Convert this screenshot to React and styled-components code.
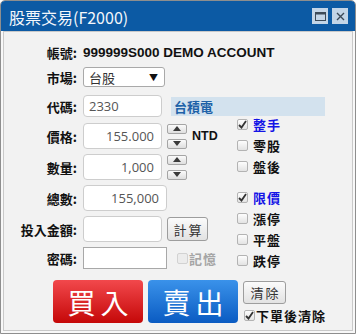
import styled, { createGlobalStyle } from "styled-components";

const GlobalStyle = createGlobalStyle`
  html, body { margin: 0; padding: 0; background: #ffffff; }
  body { font-family: "Noto Sans CJK TC", "Liberation Sans", sans-serif; }
  * { box-sizing: border-box; }
`;

const Window = styled.div`
  width: 356px;
  height: 334px;
  border: 1px solid #8e8e8e;
  border-radius: 5px 5px 0 0;
  background: #f8f8f8;
  display: flex;
  flex-direction: column;
  overflow: hidden;
`;

const TitleBar = styled.div`
  height: 30px;
  flex: none;
  background: #0c5aa4;
  display: flex;
  align-items: center;
  justify-content: space-between;
  padding: 0 7px 0 8px;
`;

const Title = styled.span`
  color: #f4f7fb;
  font-size: 16px;
  line-height: 1;
  margin-top: 2px;
`;

const TitleButtons = styled.div`
  display: flex;
  gap: 4px;
`;

const TitleButton = styled.span`
  width: 16px;
  height: 16px;
  background: #c3d5e7;
  display: flex;
  align-items: center;
  justify-content: center;
`;

const Body = styled.div`
  flex: 1;
  margin: 0 2px 2px;
  border: 1px solid #c9c9c9;
  background: #f2f2f2;
  padding-top: 10px;
`;

const Row = styled.div`
  display: flex;
  align-items: center;
  height: ${(p) => p.$h || 26}px;
  margin-top: ${(p) => p.$mt || 0}px;
`;

const Label = styled.span`
  width: 73px;
  margin-right: 6px;
  flex: none;
  text-align: right;
  font-size: 13px;
  font-weight: bold;
  line-height: 1;
  color: #111;
  white-space: nowrap;
`;

const Account = styled.span`
  font-family: "Liberation Sans", sans-serif;
  font-size: 13.5px;
  font-weight: bold;
  color: #111;
`;

const SelectBox = styled.div`
  width: 82px;
  height: 20px;
  background: #fff;
  border: 1px solid #a9a9a9;
  border-radius: 3px;
  display: flex;
  align-items: center;
  justify-content: space-between;
  padding: 0 6px 0 5px;
  font-size: 13px;
  color: #333;
  line-height: 1;
`;

const Arrow = styled.span`
  font-size: 9px;
  color: #111;
`;

const Field = styled.input`
  width: ${(p) => p.$w || 79}px;
  height: ${(p) => p.$h || 26}px;
  border: 1px solid ${(p) => (p.$square ? "#a8a8a8" : "#cdcdcd")};
  border-radius: ${(p) => (p.$square ? 0 : 4)}px;
  background: #fff;
  font-family: "Open Sans", "Liberation Sans", sans-serif;
  font-size: 13px;
  color: #555;
  text-align: ${(p) => (p.$right ? "right" : "left")};
  padding: 0 7px 0 5px;
  outline: none;
`;

const StockName = styled.span`
  width: 154px;
  height: 19px;
  margin-left: 9px;
  background: #d3e2ee;
  color: #1f62a8;
  font-size: 13px;
  font-weight: bold;
  line-height: 19px;
  padding-left: 3px;
`;

const Middle = styled.div`
  display: flex;
`;

const LeftCol = styled.div`
  width: 232px;
  flex: none;
  padding-top: 6px;
`;

const RightCol = styled.div`
  margin-top: -3px;
  padding-left: 1px;
`;

const Spinner = styled.div`
  display: flex;
  flex-direction: column;
  justify-content: space-between;
  height: 25px;
  margin-left: 5px;
`;

const SpinButton = styled.span`
  width: 20px;
  height: 10px;
  border: 1px solid #a5a5a5;
  border-radius: 2px;
  background: linear-gradient(#fbfbfb, #dedede);
  display: flex;
  align-items: center;
  justify-content: center;
`;

const Unit = styled.span`
  margin-left: 5px;
  font-family: "Liberation Sans", sans-serif;
  font-size: 12.5px;
  font-weight: bold;
  color: #111;
`;

const SmallButton = styled.button`
  width: ${(p) => p.$w || 41}px;
  height: ${(p) => p.$h || 24}px;
  margin-left: ${(p) => p.$ml || 0}px;
  border: 1px solid #9d9d9d;
  border-radius: 3px;
  background: linear-gradient(#fbfbfb, #e2e2e2);
  font-family: "Noto Sans CJK TC", sans-serif;
  font-size: 13px;
  letter-spacing: 2px;
  padding: 0 0 0 2px;
  color: #333;
  line-height: 1;
`;

const CheckRow = styled.label`
  display: flex;
  align-items: center;
  height: ${(p) => p.$h || 21}px;
  margin-top: ${(p) => p.$mt || 0}px;
  margin-left: ${(p) => p.$ml || 0}px;
  gap: ${(p) => p.$gap ?? 5}px;
  font-size: 13px;
  font-weight: bold;
  line-height: 1;
  letter-spacing: 1px;
  color: ${(p) => (p.$disabled ? "#a5a5a5" : p.$blue ? "#1414e6" : "#111")};
`;

const Box = styled.span`
  width: 11px;
  height: 11px;
  flex: none;
  border: 1px solid ${(p) => (p.$disabled ? "#d2d2d2" : "#b3b3b3")};
  border-radius: 2px;
  background: ${(p) =>
    p.$disabled ? "#ececec" : "linear-gradient(#fdfdfd, #e3e3e3)"};
  display: flex;
  align-items: center;
  justify-content: center;
`;

const Actions = styled.div`
  display: flex;
  gap: 5px;
  padding-left: 49px;
  margin-top: 9px;
`;

const BigButton = styled.button`
  width: 90px;
  height: 43px;
  border: none;
  border-radius: 4px;
  background: ${(p) =>
    p.$buy
      ? "linear-gradient(#f2484c, #c50808)"
      : "linear-gradient(#3a92ea, #0a5bc2)"};
  color: #fff;
  font-family: "Noto Sans CJK TC", sans-serif;
  font-size: 28px;
  letter-spacing: 5px;
  padding: 0 0 0 5px;
  line-height: 1;
`;

const SideActions = styled.div`
  display: flex;
  flex-direction: column;
  padding-top: 1px;
`;

const Check = () => (
  <svg width="9" height="9" viewBox="0 0 9 9">
    <path d="M1 5 L3.5 7.5 L8 1" fill="none" stroke="#333" strokeWidth="1.8" />
  </svg>
);

const Tri = ({ down }) => (
  <svg width="8" height="5" viewBox="0 0 8 5">
    <path d={down ? "M0 0 H8 L4 5 Z" : "M0 5 H8 L4 0 Z"} fill="#3a3a3a" />
  </svg>
);

const CheckItem = ({ label, checked, blue, disabled, ...rest }) => (
  <CheckRow $blue={blue} $disabled={disabled} {...rest}>
    <Box $disabled={disabled}>{checked && <Check />}</Box>
    {label}
  </CheckRow>
);

const SpinPair = () => (
  <Spinner>
    <SpinButton>
      <Tri />
    </SpinButton>
    <SpinButton>
      <Tri down />
    </SpinButton>
  </Spinner>
);

export default function App() {
  return (
    <>
      <GlobalStyle />
      <Window>
        <TitleBar>
          <Title>股票交易(F2000)</Title>
          <TitleButtons>
            <TitleButton>
              <svg width="11" height="9" viewBox="0 0 11 9">
                <rect x="0.5" y="0.5" width="10" height="8" fill="none" stroke="#3c4a58" />
                <rect x="0" y="0" width="11" height="2.5" fill="#3c4a58" />
              </svg>
            </TitleButton>
            <TitleButton>
              <svg width="9" height="9" viewBox="0 0 9 9">
                <path d="M1 1 L8 8 M8 1 L1 8" stroke="#3c4a58" strokeWidth="1.4" />
              </svg>
            </TitleButton>
          </TitleButtons>
        </TitleBar>
        <Body>
          <Row $h={20}>
            <Label>帳號:</Label>
            <Account>999999S000 DEMO ACCOUNT</Account>
          </Row>
          <Row $h={20} $mt={5}>
            <Label>市場:</Label>
            <SelectBox>
              台股
              <Arrow>▼</Arrow>
            </SelectBox>
          </Row>
          <Row $h={22} $mt={8}>
            <Label>代碼:</Label>
            <Field $h={22} defaultValue="2330" readOnly />
            <StockName>台積電</StockName>
          </Row>
          <Middle>
            <LeftCol>
              <Row>
                <Label>價格:</Label>
                <Field $right defaultValue="155.000" readOnly />
                <SpinPair />
                <Unit>NTD</Unit>
              </Row>
              <Row $mt={5}>
                <Label>數量:</Label>
                <Field $right defaultValue="1,000" readOnly />
                <SpinPair />
              </Row>
              <Row $mt={5}>
                <Label>總數:</Label>
                <Field $right $w={84} defaultValue="155,000" readOnly />
              </Row>
              <Row $mt={5}>
                <Label>投入金額:</Label>
                <Field readOnly />
                <SmallButton $ml={5}>計算</SmallButton>
              </Row>
              <Row $h={22} $mt={5}>
                <Label>密碼:</Label>
                <Field $h={22} $w={84} $square type="password" readOnly />
                <CheckItem label="記憶" disabled $ml={10} $gap={1} />
              </Row>
            </LeftCol>
            <RightCol>
              <CheckItem label="整手" checked blue />
              <CheckItem label="零股" />
              <CheckItem label="盤後" />
              <CheckItem label="限價" checked blue $mt={10} />
              <CheckItem label="漲停" />
              <CheckItem label="平盤" />
              <CheckItem label="跌停" />
            </RightCol>
          </Middle>
          <Actions>
            <BigButton $buy>買入</BigButton>
            <BigButton>賣出</BigButton>
            <SideActions>
              <SmallButton $w={43} $h={23}>清除</SmallButton>
              <CheckItem label="下單後清除" checked $h={16} $mt={3} $ml={1} $gap={1} />
            </SideActions>
          </Actions>
        </Body>
      </Window>
    </>
  );
}
